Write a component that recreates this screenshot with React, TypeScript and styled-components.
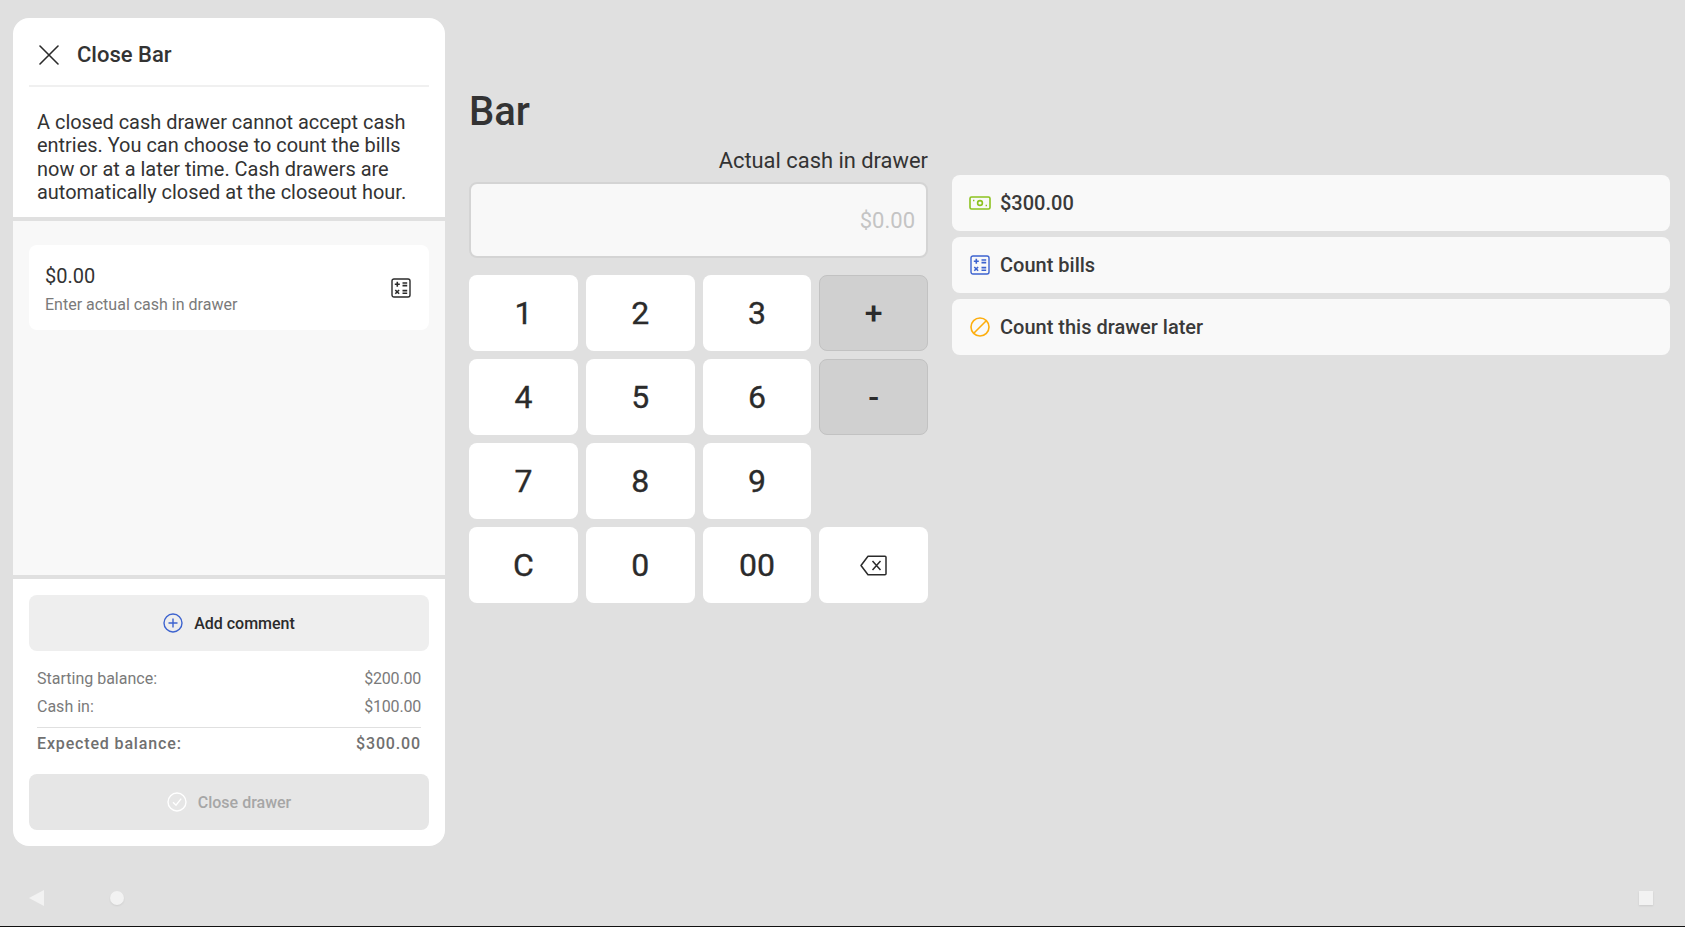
import React from "react";
import styled, { createGlobalStyle } from "styled-components";

const Global = createGlobalStyle`
  html, body { margin: 0; padding: 0; height: 100%; }
  body { background: #e0e0e0; font-family: Roboto, "Liberation Sans", sans-serif; color: #2b2b2b; overflow: hidden; }
  #root { height: 100%; }
`;

const Screen = styled.div`
  width: 1685px; height: 927px; box-sizing: border-box; border-bottom: 1px solid #111;
  background: #e0e0e0; display: flex; flex-direction: column;
`;
const Main = styled.div`display: flex; padding: 18px 15px 0 13px; height: 828px; flex: none;`;
const Panel = styled.aside`
  width: 432px; height: 828px; flex: none; background: #fff; border-radius: 16px; overflow: hidden;
  display: flex; flex-direction: column;
`;
const PanelHeader = styled.header`
  height: 61px; margin: 0 16px; padding: 6px 0 0 10px; border-bottom: 2px solid #f0f0f0;
  display: flex; align-items: center; gap: 18px; flex: none;
`;
const PanelTitle = styled.h2`margin: 0; font-size: 22px; line-height: 28px; font-weight: 500; color: #333;`;
const Intro = styled.p`
  margin: 0; padding: 24px 24px 11px; box-sizing: border-box; font-size: 19.95px; line-height: 23.33px;
  color: #333; border-bottom: 4px solid #e0e0e0; flex: none; height: 134px;
`;
const Middle = styled.div`flex: 1; background: #f8f8f8; padding: 24px 16px; min-height: 0;`;
const EntryCard = styled.div`
  height: 85px; box-sizing: border-box; background: #fff; border-radius: 8px; padding: 0 18px 0 16px;
  display: flex; align-items: center; justify-content: space-between;
`;
const EntryText = styled.div`display: flex; flex-direction: column; gap: 7px; padding-top: 3px;`;
const EntryValue = styled.span`font-size: 20px; line-height: 24px; color: #333;`;
const EntrySub = styled.span`font-size: 16px; line-height: 20px; color: #7a7a7a;`;
const Footer = styled.footer`
  flex: none; height: 271px; box-sizing: border-box; border-top: 4px solid #e0e0e0; padding: 16px 16px;
  display: flex; flex-direction: column;
`;
const ActionButton = styled.button<{ $disabled?: boolean }>`
  height: 56px; flex: none; border: 0; border-radius: 8px; width: 100%;
  background: ${p => (p.$disabled ? "#e6e6e6" : "#eeeeee")};
  color: ${p => (p.$disabled ? "#a6a6a6" : "#2b2b2b")};
  font: 500 16px Roboto, sans-serif; display: flex; align-items: center; justify-content: center; gap: 11px;
`;
const Totals = styled.div`padding: 14px 8px 16px; display: flex; flex-direction: column;`;
const TotalRow = styled.div`
  display: flex; justify-content: space-between; font-size: 16px; line-height: 28px; color: #7a7a7a;
`;
const TotalValue = styled.span`letter-spacing: -0.2px;`;
const ExpectedRow = styled(TotalRow)`
  border-top: 1px solid #e0e0e0; margin-top: 6px; padding-top: 2px; font-weight: 500; letter-spacing: 0.85px; color: #707070;
`;
const Workspace = styled.main`flex: 1; padding: 72px 0 0 24px; display: flex; flex-direction: column;`;
const Heading = styled.h1`margin: 0 0 15px; font-size: 40px; line-height: 44px; font-weight: 500; color: #333;`;
const Columns = styled.div`display: flex; gap: 24px;`;
const PadColumn = styled.section`width: 459px; flex: none; display: flex; flex-direction: column;`;
const FieldLabel = styled.label`font-size: 21.9px; line-height: 24px; text-align: right; margin-bottom: 9px; color: #333;`;
const AmountField = styled.div`
  height: 76px; box-sizing: border-box; border: 2px solid #d4d4d4; border-radius: 8px; background: #f8f8f8;
  display: flex; align-items: center; justify-content: flex-end; padding: 0 11px; font-size: 22px; color: #c4c4c4;
  margin-bottom: 17px;
`;
const Keypad = styled.div`display: grid; grid-template-columns: repeat(4, 1fr); grid-auto-rows: 76px; gap: 8px;`;
const Key = styled.button<{ $op?: boolean }>`
  border-radius: 8px; font: ${p => (p.$op ? 500 : 400)} 32px Roboto, sans-serif; color: #2b2b2b; padding: 0;
  -webkit-text-stroke: ${p => (p.$op ? "0" : "0.35px")};
  background: ${p => (p.$op ? "#d0d0d0" : "#fff")};
  border: ${p => (p.$op ? "1px solid #c2c2c2" : "0")};
  display: flex; align-items: center; justify-content: center;
`;
const Spacer = styled.div``;
const OptionList = styled.div`flex: 1; margin-top: 26px; display: flex; flex-direction: column; gap: 6px;`;
const Option = styled.div`
  height: 56px; border-radius: 8px; background: #f9f9f9; padding: 0 17px; display: flex; align-items: center; gap: 9px;
  font-size: 20px; font-weight: 500; color: #3a3a3a;
`;
const OptionIcon = styled.span`width: 22px; height: 22px; display: flex; align-items: center; justify-content: center; flex: none;`;
const NavBar = styled.nav`flex: 1; display: flex; align-items: flex-start; padding: 45px 32px 0 29px;`;
const NavBack = styled.span`
  width: 0; height: 0; border-style: solid; border-width: 8.5px 15px 8.5px 0;
  border-color: transparent #f2f2f2 transparent transparent; margin-right: 66px; margin-top: -1px;
`;
const NavHome = styled.span`width: 14px; height: 14px; border-radius: 50%; background: #f2f2f2; box-shadow: 0 1px 2px rgba(0,0,0,.08);`;
const NavRecent = styled.span`width: 14px; height: 14px; margin-left: auto; background: #f2f2f2; box-shadow: 0 1px 2px rgba(0,0,0,.1);`;

const CloseIcon = () => (
  <svg width="20" height="20" viewBox="0 0 20 20" fill="none" stroke="#2b2b2b" strokeWidth="1.6" strokeLinecap="round">
    <path d="M1 1 19 19M19 1 1 19" />
  </svg>
);
const CalcIcon = ({ color, size = 20 }: { color: string; size?: number }) => (
  <svg width={size} height={size} viewBox="0 0 20 20" fill="none" stroke={color} strokeWidth="1.4">
    <rect x="1" y="1" width="18" height="18" rx="2" />
    <path strokeWidth="1.6" d="M3.8 6.2h5M6.3 3.8v5M11.5 5h4.7M11.5 7.6h4.7M11.5 12.6h4.7M11.5 15.2h4.7M4.3 12l3.8 3.8M8.1 12l-3.8 3.8" />
  </svg>
);
const BillIcon = () => (
  <svg width="22" height="14" viewBox="0 0 22 14" fill="none" stroke="#8cc21f">
    <rect x="1" y="1" width="20" height="12" rx="1.5" strokeWidth="1.6" />
    <circle cx="11" cy="7" r="2.4" strokeWidth="1.6" />
    <path strokeWidth="1.5" d="M4 4.5h1.4M16.6 9.5H18" />
  </svg>
);
const BanIcon = () => (
  <svg width="20" height="20" viewBox="0 0 20 20" fill="none" stroke="#fdae0f" strokeWidth="1.6">
    <circle cx="10" cy="10" r="9" />
    <path d="M16 4 4 16" />
  </svg>
);
const PlusCircleIcon = () => (
  <svg width="20" height="20" viewBox="0 0 20 20" fill="none" stroke="#3d63cf" strokeWidth="1.4">
    <circle cx="10" cy="10" r="9" />
    <path d="M10 5.5v9M5.5 10h9" />
  </svg>
);
const CheckCircleIcon = () => (
  <svg width="20" height="20" viewBox="0 0 20 20" fill="none" stroke="#fff" strokeWidth="1.4">
    <circle cx="10" cy="10" r="9" />
    <path d="M6 10.2 9 13.2 14.2 6.6" />
  </svg>
);
const BackspaceIcon = () => (
  <svg width="27" height="21" viewBox="0 0 27 21" fill="none" stroke="#2b2b2b" strokeWidth="1.5" strokeLinejoin="round">
    <path d="M8 1.2h17a1 1 0 0 1 1 1v16.6a1 1 0 0 1-1 1H8L1 10.5Z" />
    <path d="M12.5 6 20.5 15M20.5 6 12.5 15" />
  </svg>
);

const keys: { label: React.ReactNode; op?: boolean; blank?: boolean }[] = [
  { label: "1" }, { label: "2" }, { label: "3" }, { label: "+", op: true },
  { label: "4" }, { label: "5" }, { label: "6" }, { label: "-", op: true },
  { label: "7" }, { label: "8" }, { label: "9" }, { label: "", blank: true },
  { label: "C" }, { label: "0" }, { label: "00" }, { label: <BackspaceIcon /> },
];

export default function App() {
  return (
    <Screen>
      <Global />
      <Main>
        <Panel>
          <PanelHeader>
            <CloseIcon />
            <PanelTitle>Close Bar</PanelTitle>
          </PanelHeader>
          <Intro>
            A closed cash drawer cannot accept cash entries. You can choose to count the bills now or at a later time. Cash drawers are automatically closed at the closeout hour.
          </Intro>
          <Middle>
            <EntryCard>
              <EntryText>
                <EntryValue>$0.00</EntryValue>
                <EntrySub>Enter actual cash in drawer</EntrySub>
              </EntryText>
              <CalcIcon color="#2b2b2b" />
            </EntryCard>
          </Middle>
          <Footer>
            <ActionButton><PlusCircleIcon />Add comment</ActionButton>
            <Totals>
              <TotalRow><span>Starting balance:</span><TotalValue>$200.00</TotalValue></TotalRow>
              <TotalRow><span>Cash in:</span><TotalValue>$100.00</TotalValue></TotalRow>
              <ExpectedRow><span>Expected balance:</span><span>$300.00</span></ExpectedRow>
            </Totals>
            <ActionButton $disabled><CheckCircleIcon />Close drawer</ActionButton>
          </Footer>
        </Panel>
        <Workspace>
          <Heading>Bar</Heading>
          <Columns>
            <PadColumn>
              <FieldLabel>Actual cash in drawer</FieldLabel>
              <AmountField>$0.00</AmountField>
              <Keypad>
                {keys.map((k, i) => k.blank ? <Spacer key={i} /> : <Key key={i} $op={k.op}>{k.label}</Key>)}
              </Keypad>
            </PadColumn>
            <OptionList>
              <Option><OptionIcon><BillIcon /></OptionIcon>$300.00</Option>
              <Option><OptionIcon><CalcIcon color="#3d63cf" /></OptionIcon>Count bills</Option>
              <Option><OptionIcon><BanIcon /></OptionIcon>Count this drawer later</Option>
            </OptionList>
          </Columns>
        </Workspace>
      </Main>
      <NavBar>
        <NavBack />
        <NavHome />
        <NavRecent />
      </NavBar>
    </Screen>
  );
}
